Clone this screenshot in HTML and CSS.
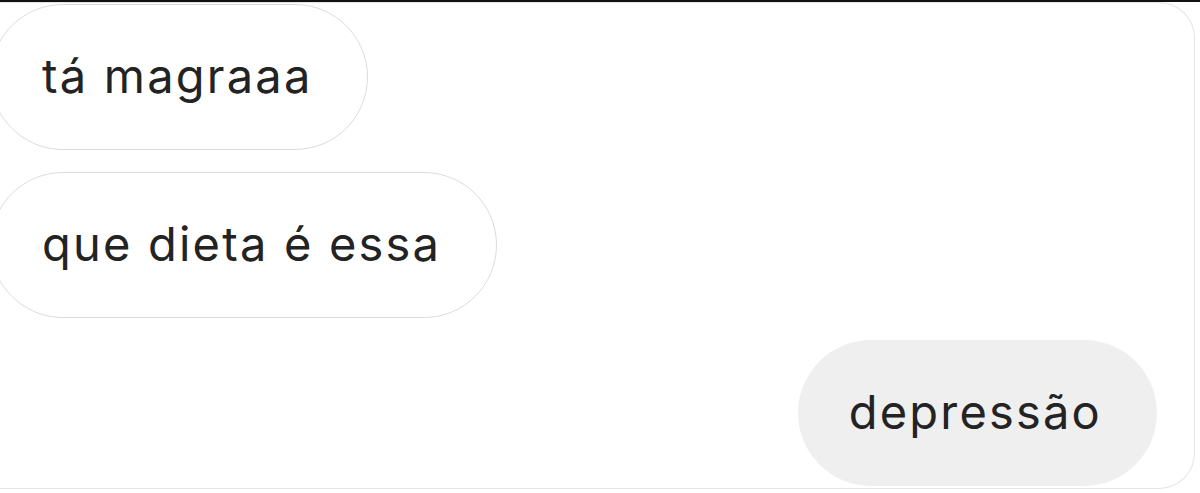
FILE: index.html
```html
<!DOCTYPE html>
<html lang="pt">
<head>
<meta charset="utf-8">
<title>Chat</title>
<link rel="stylesheet" href="styles.css">
</head>
<body>
<div class="topbar"></div>
<div class="thread">
  <div class="bubble received">tá magraaa</div>
  <div class="bubble received">que dieta é essa</div>
  <div class="bubble sent">depressão</div>
</div>
</body>
</html>
```

FILE: styles.css
```css
html, body {
  margin: 0;
  padding: 0;
  background: #ffffff;
  overflow: hidden;
}
body {
  width: 1200px;
  height: 493px;
  font-family: Inter, "Liberation Sans", Arial, sans-serif;
  color: #232323;
}
.topbar {
  height: 2px;
  background: #111111;
}
.thread {
  margin-left: -20px;
  width: 1215px;
  box-sizing: border-box;
  height: 487px;
  border: 1px solid #e4e4e4;
  border-left: none;
  border-radius: 0 36px 36px 0;
  padding: 1px 37px 2px 10px;
  display: flex;
  flex-direction: column;
  align-items: flex-start;
  gap: 22px;
}
.bubble {
  box-sizing: border-box;
  height: 146px;
  padding: 42px 55px 0 51px;
  font-size: 47px;
  line-height: 58px;
  letter-spacing: 2.2px;
  border-radius: 73px;
  white-space: nowrap;
}
.received {
  background: #ffffff;
  border: 1.5px solid #dcdcdc;
}
.sent {
  align-self: flex-end;
  background: #efefef;
  padding-top: 43px;
}
```
